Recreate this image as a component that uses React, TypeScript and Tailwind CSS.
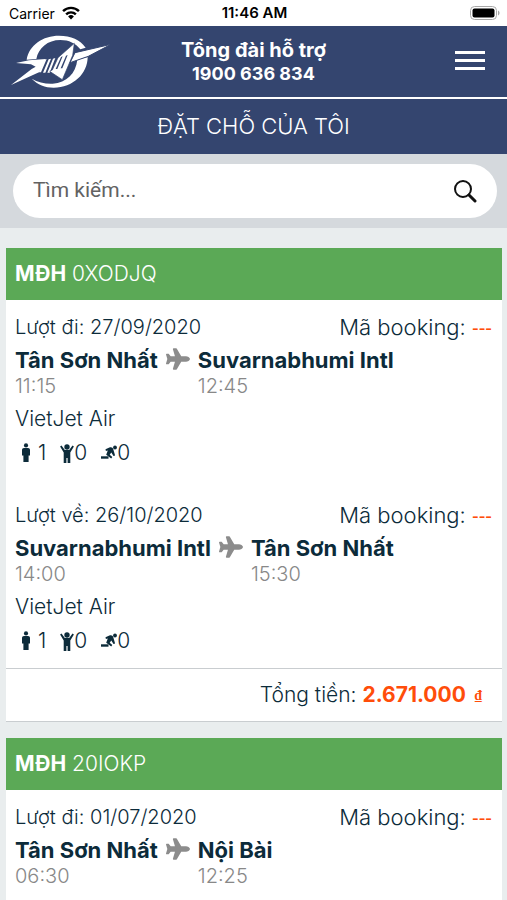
import { FaPlane } from 'react-icons/fa'

type Leg = {
  label: string
  date: string
  from: string
  to: string
  depart: string
  arrive: string
  airline?: string
}

type Booking = { code: string; total?: string; legs: Leg[] }

const bookings: Booking[] = [
  {
    code: '0XODJQ',
    total: '2.671.000',
    legs: [
      {
        label: 'Lượt đi',
        date: '27/09/2020',
        from: 'Tân Sơn Nhất',
        to: 'Suvarnabhumi Intl',
        depart: '11:15',
        arrive: '12:45',
        airline: 'VietJet Air',
      },
      {
        label: 'Lượt về',
        date: '26/10/2020',
        from: 'Suvarnabhumi Intl',
        to: 'Tân Sơn Nhất',
        depart: '14:00',
        arrive: '15:30',
        airline: 'VietJet Air',
      },
    ],
  },
  {
    code: '20IOKP',
    legs: [
      {
        label: 'Lượt đi',
        date: '01/07/2020',
        from: 'Tân Sơn Nhất',
        to: 'Nội Bài',
        depart: '06:30',
        arrive: '12:25',
      },
    ],
  },
]

function StatusBar() {
  return (
    <div className="grid h-[26px] shrink-0 grid-cols-3 items-center bg-white pr-[7px] pl-[9px] text-[14px] text-black">
      <div className="flex items-center gap-[6px]">
        <span>Carrier</span>
        <svg viewBox="0 0 20 15" className="h-[14px] w-5" fill="none" stroke="currentColor" strokeWidth="2.6">
          <path d="M1.500 5.500a12 12 0 0 1 17 0" />
          <path d="M4.800 9a7.400 7.400 0 0 1 10.400 0" />
          <path d="M10 14.500 6.900 11.300a4.400 4.400 0 0 1 6.200 0z" fill="currentColor" stroke="none" />
        </svg>
      </div>
      <div className="text-center text-[15px] font-semibold">11:46 AM</div>
      <svg viewBox="0 0 30 14" className="h-[14px] w-[30px] justify-self-end">
        <rect x="0.5" y="0.5" width="26" height="13" rx="4" fill="#fff" stroke="#a8a8a8" />
        <rect x="2.5" y="2.500" width="22" height="9" rx="2" fill="#000" />
        <path d="M28 4.500c2 .8 2 4.200 0 5z" fill="#a8a8a8" />
      </svg>
    </div>
  )
}

function Logo() {
  return (
    <svg viewBox="15 18 306 162" className="h-[54px] w-[102px]" fill="#fff">
      {/* ring */}
      <path d="M65 92C72 48 114 20 162 20c36 0 64 12 80 36l-16 5c-14-18-34-28-60-28-38 0-66 24-72 57z" />
      <path d="M80 149c18 18 40 27 66 27 58 0 102-42 102-92l-31 8c-5 42-32 68-74 72-22 1-44-4-63-15z" />
      {/* left wing */}
      <path d="M33 102 72 94l50-4-20 40-84 38 62-48 12-7-14-7z" />
      <path d="m118 92 7-2-17 40h-7zM131 91l7-2-17 42h-7zM144 89l7-2-17 44h-7z" />
      {/* centre arrow */}
      <path d="m208 43-5 36-31 73-38-25 8-4 17-37z" stroke="#34456f" strokeWidth="2" />
      <path d="m168 84 5-2-16 38h-5zM183 80l5-2-16 40h-5z" fill="#34456f" />
      {/* right spike */}
      <path d="m210 71 108-25-68 36-55 19z" stroke="#34456f" strokeWidth="3" />
    </svg>
  )
}

function Header() {
  return (
    <header className="bg-[#34456f] text-white">
      <div className="grid grid-cols-[1fr_auto_1fr] items-center border-b-2 border-white px-[10px] pt-[9px] pb-2">
        <Logo />
        <div className="text-center leading-6 font-bold">
          <p className="text-[20px]">Tổng đài hỗ trợ</p>
          <p className="text-[18px]">1900 636 834</p>
        </div>
        <button type="button" aria-label="Menu" className="mr-3 flex w-[30px] flex-col gap-[5px] self-start justify-self-end pt-4">
          <span className="h-[3px] bg-white" />
          <span className="h-[3px] bg-white" />
          <span className="h-[3px] bg-white" />
        </button>
      </div>
      <h1 className="py-3 text-center text-[22px] leading-[31px] font-light">ĐẶT CHỖ CỦA TÔI</h1>
    </header>
  )
}

function SearchBar() {
  return (
    <div className="bg-[#d5d9dd] py-[10px] pr-[10px] pl-[13px]">
      <label className="flex h-[54px] items-center rounded-full bg-white px-5">
        <input
          type="text"
          aria-label="Tìm kiếm"
          placeholder="Tìm kiếm..."
          className="min-w-0 flex-1 font-[Roboto] text-[21px] text-black outline-none placeholder:text-[#626262]"
        />
        <svg viewBox="0 0 24 24" className="size-6" fill="none" stroke="#111" strokeLinecap="round">
          <circle cx="10" cy="10" r="8" strokeWidth="2" />
          <path d="m16 16 6 6" strokeWidth="3" />
        </svg>
      </label>
    </div>
  )
}

function AdultIcon() {
  return (
    <svg viewBox="0 0 10 20" className="h-5 w-[10px]" fill="currentColor">
      <circle cx="5" cy="2.4" r="2.1" />
      <path d="M3 5h4c1.200 0 2 .8 2 2v5.500H7.600V19H2.400v-6.500H1V7c0-1.200.8-2 2-2z" />
    </svg>
  )
}

function ChildIcon() {
  return (
    <svg viewBox="0 0 14 20" className="h-5 w-[14px]" fill="currentColor">
      <circle cx="7" cy="4" r="2.700" />
      <path d="M1.500 2.600 4.800 7h4.400l3.300-4.400 1.400 1-3.600 5.900V20H7.600v-5H6.400v5H3.700V9.500L.1 3.600z" />
    </svg>
  )
}

function InfantIcon() {
  return (
    <svg viewBox="0 0 16 16" className="size-4" fill="currentColor">
      <circle cx="14" cy="2.500" r="1.900" />
      <path d="M4.500 4.200 9 2.300c1.600-.5 2.700.2 3.200 1.700l1.900 6.600-1.600.5-2.200-3.600-1.600 2.200 2.600 2.300-1.100 1.500-5-3.800 1.600-4.200-1.900.5z" />
      <path d="M0 11.300h7.500v2.400H0z" />
    </svg>
  )
}

function LegDetails({ leg }: { leg: Leg }) {
  return (
    <section className="flex flex-col text-[20px] leading-[26px] font-light">
      <div className="flex justify-between">
        <span>
          {leg.label}: {leg.date}
        </span>
        <span className="text-[22px]">
          Mã booking:{' '}
          <span className="font-['Liberation_Sans'] text-[20px] font-normal text-[#ff4d0a]">---</span>
        </span>
      </div>
      <div className="mt-[6px] flex gap-2">
        <div>
          <p className="text-[22px] font-bold">{leg.from}</p>
          <p className="text-[#888]">{leg.depart}</p>
        </div>
        <FaPlane className="size-6 text-[#8c8c8c]" />
        <div>
          <p className="text-[22px] font-bold">{leg.to}</p>
          <p className="text-[#888]">{leg.arrive}</p>
        </div>
      </div>
      {leg.airline && (
        <div className="text-[21px]">
          <p className="mt-[7px]">{leg.airline}</p>
          <div className="mt-2 flex items-center gap-[14px] pl-[6px]">
            <span className="flex items-center gap-[7px]">
              <AdultIcon />1
            </span>
            <span className="flex items-center">
              <ChildIcon />0
            </span>
            <span className="flex items-center">
              <InfantIcon />0
            </span>
          </div>
        </div>
      )}
    </section>
  )
}

function BookingCard({ booking }: { booking: Booking }) {
  return (
    <article className="bg-white text-[#0c2b3a] last:flex-1">
      <h2 className="bg-[#5ba956] px-[9px] py-3 text-[21px] leading-7 font-light text-white">
        <strong className="font-bold">MĐH</strong> {booking.code}
      </h2>
      <div className="flex flex-col gap-9 pt-[14px] pr-[10px] pb-[14px] pl-[9px]">
        {booking.legs.map((leg) => (
          <LegDetails key={leg.label} leg={leg} />
        ))}
      </div>
      {booking.total && (
        <div className="border-y border-[#c9cdd0] py-3 pr-5 text-right text-[21px] leading-7 font-light">
          Tổng tiền:{' '}
          <strong className="font-bold text-[#ff4d0a]">
            {booking.total}{' '}
            <span className="ml-1 align-[2px] font-['Liberation_Serif'] text-[14px] leading-none">₫</span>
          </strong>
        </div>
      )}
    </article>
  )
}

export default function App() {
  return (
    <div className="flex h-screen flex-col overflow-hidden bg-[#e9edee] font-[Inter,sans-serif]">
      <StatusBar />
      <Header />
      <SearchBar />
      <main className="flex flex-1 flex-col gap-4 pt-5 pr-[5px] pl-[6px]">
        {bookings.map((booking) => (
          <BookingCard key={booking.code} booking={booking} />
        ))}
      </main>
    </div>
  )
}
